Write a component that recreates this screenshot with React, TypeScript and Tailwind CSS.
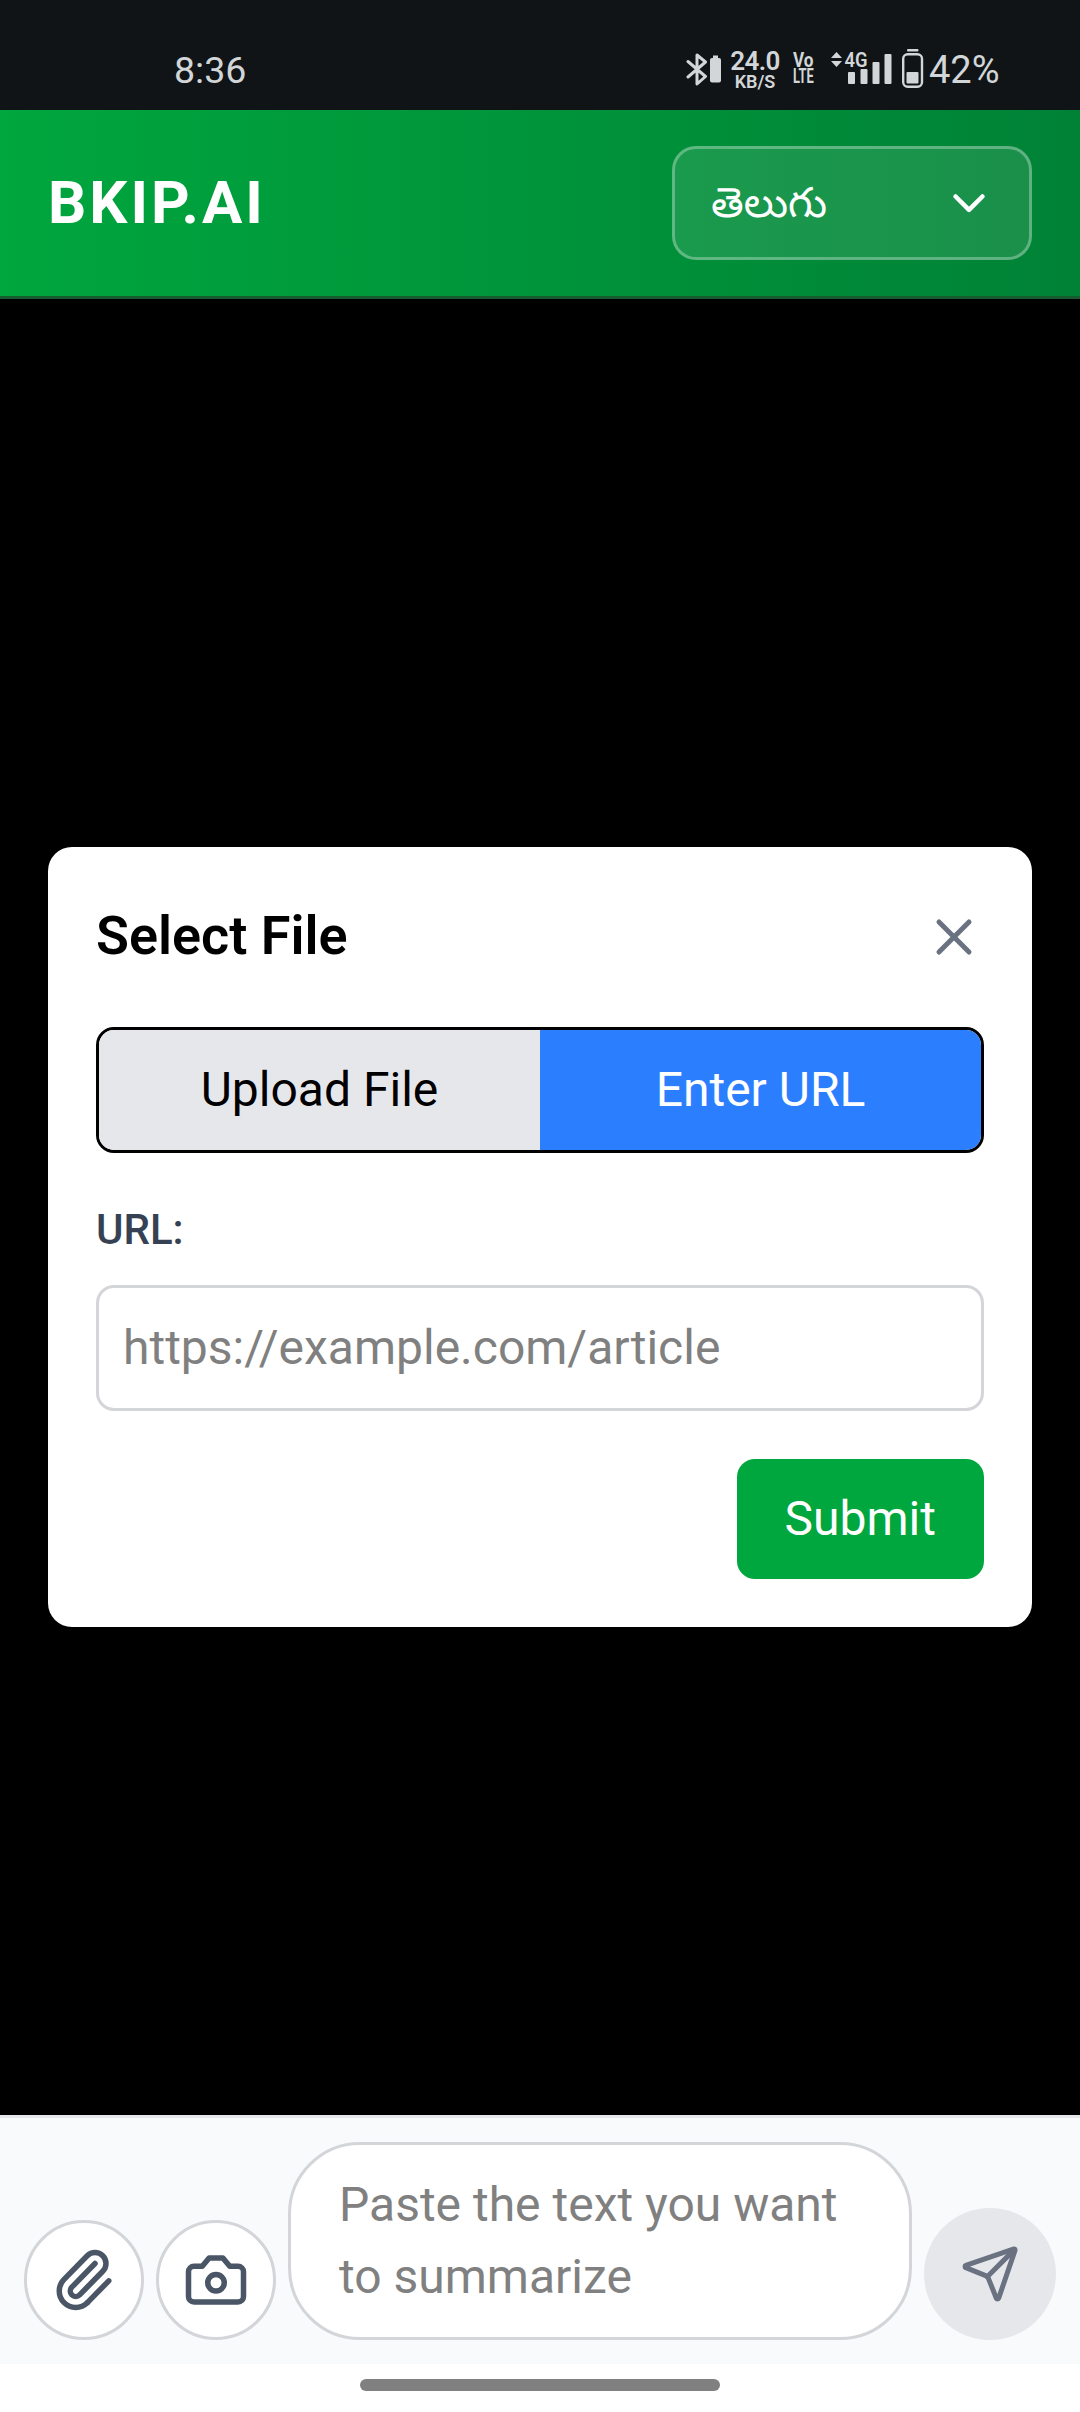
import { Send, X } from "lucide-react";

function StatusBar() {
  return (
    <header className="flex h-[110px] shrink-0 items-start justify-between bg-[#101417] pl-[174px] pr-[80px] pt-[48px] text-[#d3d6d8]">
      <span className="text-[37.5px] leading-[44px]">8:36</span>
      <div className="flex items-start">
        <svg className="h-[42px] w-[38px]" viewBox="686 48 38 42" fill="none">
          <path d="M688 61.5 L705.5 76.5 L697 84 V55 L705.5 62 L688 77" stroke="currentColor" strokeWidth="3" strokeLinejoin="round" strokeLinecap="round" />
          <rect x="713" y="55.500" width="5" height="3" fill="currentColor" />
          <rect x="710" y="58" width="11" height="24.500" rx="2" fill="currentColor" />
        </svg>
        <div className="ml-[5px] mt-[3px] flex w-[52px] flex-col items-center font-semibold">
          <span className="text-[26px] leading-[21px] tracking-[-0.6px]">24.0</span>
          <span className="mt-[1px] text-[18px] leading-[18px]">KB/S</span>
        </div>
        <div className="ml-[12px] mt-[5px] flex h-[32px] w-[26px] flex-col items-start whitespace-nowrap text-[19.5px] leading-[16px] font-bold">
          <span className="origin-left scale-x-[0.88]">Vo</span>
          <span className="origin-left scale-x-[0.66]">LTE</span>
        </div>
        <svg className="ml-[10px] h-[42px] w-[66px]" viewBox="829 48 66 42" fill="currentColor">
          <path d="M836.500 52 l5.500 6 h-11 z M836.500 67 l5.500 -6 h-11 z" />
          <text x="844.500" y="67" fontSize="20" fontWeight="600" textLength="23" lengthAdjust="spacingAndGlyphs">4G</text>
          <rect x="848" y="72" width="7" height="12" rx="1" />
          <rect x="860.500" y="69" width="7" height="15" rx="1" />
          <rect x="872.500" y="62" width="7" height="22" rx="1" />
          <rect x="884.500" y="54" width="7" height="30" rx="1" />
        </svg>
        <svg className="ml-[5px] h-[42px] w-[26px]" viewBox="900 48 26 42" fill="none">
          <rect x="907" y="49" width="11.500" height="2.500" rx="1" fill="currentColor" />
          <rect x="903.200" y="54.200" width="18.800" height="32.600" rx="4.500" stroke="currentColor" strokeWidth="2.400" />
          <rect x="906.500" y="72" width="12" height="11.500" rx="1" fill="currentColor" />
        </svg>
        <span className="ml-[3px] w-[71px] text-[38px] leading-[44px]">42%</span>
      </div>
    </header>
  );
}

function AppHeader() {
  return (
    <div className="flex h-[189px] shrink-0 items-center justify-between border-b-[3px] border-[#165c30] bg-linear-to-r from-[#00a63e] to-[#008236] px-12">
      <h1 className="text-[60px] leading-[84px] font-bold tracking-[3px] text-white">BKIP.AI</h1>
      <button className="flex h-[114px] w-[360px] items-center justify-between rounded-[24px] border-[3px] border-white/30 bg-white/10 pl-9 pr-11 text-[42px] text-white">
        <span className="leading-[60px]">తెలుగు</span>
        <svg className="h-[20px] w-[32px]" viewBox="0 0 32 20" fill="none">
          <path d="M2.600 3.500 L16 16.800 L29.400 3.500" stroke="currentColor" strokeWidth="4.500" strokeLinecap="round" strokeLinejoin="round" />
        </svg>
      </button>
    </div>
  );
}

function SelectFileDialog() {
  return (
    <section className="flex w-[984px] flex-col rounded-[24px] bg-white p-12 text-[48px] leading-[72px] text-black">
      <div className="mb-12 flex h-[84px] items-center justify-between">
        <h2 className="pb-[2px] text-[54px] leading-[82px] font-semibold">Select File</h2>
        <button className="text-[#6a7282]">
          <X size={60} strokeWidth={2} />
        </button>
      </div>
      <div className="mb-12 grid grid-cols-2 overflow-hidden rounded-[18px] border-[3px] border-black">
        <button className="bg-[#e5e7eb] py-6">Upload File</button>
        <button className="bg-[#2b7fff] py-6 text-white">Enter URL</button>
      </div>
      <label className="mb-6 pb-[2px] text-[42px] leading-[58px] font-medium text-[#364153]">URL:</label>
      <input
        className="mb-12 h-[126px] w-full rounded-[18px] border-[3px] border-[#d3d5d9] px-6 pb-[2px] placeholder:text-[#808080]"
        placeholder="https://example.com/article"
      />
      <button className="self-end rounded-[18px] bg-[#00a63e] px-12 py-6 text-white">Submit</button>
    </section>
  );
}

function Composer() {
  return (
    <footer className="flex h-[249px] shrink-0 items-end gap-3 border-t-[3px] border-[#e5e7eb] bg-[#f9fafb] px-6 pb-6 text-[#4a5565]">
      <button className="flex size-[120px] shrink-0 items-center justify-center rounded-full border-[3px] border-[#d3d5d9] bg-white">
        <svg className="size-[66px]" viewBox="0 0 24 24" fill="none" stroke="currentColor" strokeWidth="2" strokeLinecap="round" strokeLinejoin="round">
          <path d="M13.234 20.252 21 12.3" />
          <path d="m16 6-8.414 8.586a2 2 0 0 0 0 2.828 2 2 0 0 0 2.828 0l8.414-8.586a4 4 0 0 0 0-5.656 4 4 0 0 0-5.656 0l-8.415 8.585a6 6 0 1 0 8.486 8.486" />
        </svg>
      </button>
      <button className="flex size-[120px] shrink-0 items-center justify-center rounded-full border-[3px] border-[#d3d5d9] bg-white">
        <svg className="size-[66px]" viewBox="0 0 24 24" fill="none" stroke="currentColor" strokeWidth="2" strokeLinecap="round" strokeLinejoin="round">
          <path d="M14.5 4h-5L7 7H4a2 2 0 0 0-2 2v9a2 2 0 0 0 2 2h16a2 2 0 0 0 2-2V9a2 2 0 0 0-2-2h-3l-2.5-3z" />
          <circle cx="12" cy="13" r="3" />
        </svg>
      </button>
      <textarea
        className="block h-[198px] w-[624px] shrink-0 resize-none overflow-hidden rounded-[72px] border-[3px] border-[#d3d5d9] bg-white px-12 py-6 text-[48px] leading-[72px] placeholder:text-[#808080]"
        placeholder="Paste the text you want to summarize"
      />
      <button className="flex size-[132px] shrink-0 items-center justify-center rounded-full bg-[#e5e7eb] text-[#6a7282]">
        <Send size={60} strokeWidth={2} />
      </button>
    </footer>
  );
}

export default function App() {
  return (
    <div className="flex h-[2412px] w-[1080px] flex-col bg-white font-[Roboto,'Noto_Sans_Telugu','Noto_Sans',sans-serif]">
      <StatusBar />
      <AppHeader />
      <main className="flex grow flex-col items-center bg-black pt-[548px]">
        <SelectFileDialog />
      </main>
      <Composer />
      <div className="flex h-[48px] shrink-0 items-start justify-center bg-white pt-[15px]">
        <div className="h-[12px] w-[360px] rounded-full bg-[#808080]" />
      </div>
    </div>
  );
}
